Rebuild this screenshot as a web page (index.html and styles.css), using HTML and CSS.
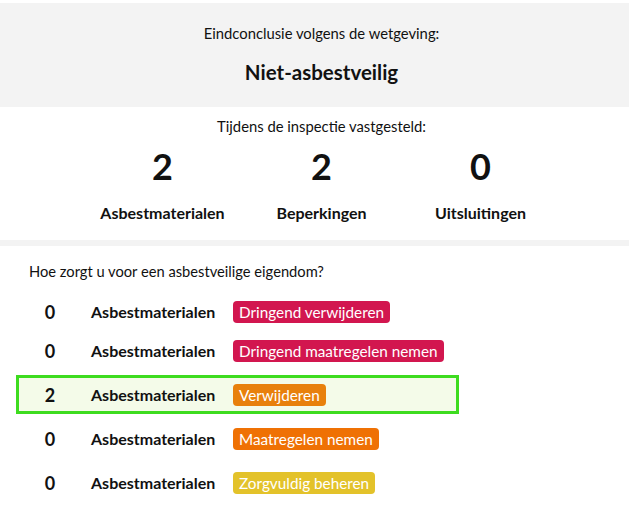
FILE: index.html
```html
<!DOCTYPE html>
<html lang="nl">
<head>
    <meta charset="UTF-8">
    <meta name="viewport" content="width=device-width, initial-scale=1.0">
    <title>Asbestattest</title>
    <link rel="stylesheet" href="styles.css">
</head>
<body>
    <div class="conclusion">
        <p class="intro">Eindconclusie volgens de wetgeving:</p>
        <h2 class="verdict">Niet-asbestveilig</h2>
    </div>

    <div class="findings">
        <p class="intro">Tijdens de inspectie vastgesteld:</p>
        <div class="stats">
            <div class="stat">
                <div class="stat-number">2</div>
                <div class="stat-label">Asbestmaterialen</div>
            </div>
            <div class="stat">
                <div class="stat-number">2</div>
                <div class="stat-label">Beperkingen</div>
            </div>
            <div class="stat">
                <div class="stat-number">0</div>
                <div class="stat-label">Uitsluitingen</div>
            </div>
        </div>
    </div>

    <div class="divider"></div>

    <div class="actions">
        <p class="question">Hoe zorgt u voor een asbestveilige eigendom?</p>
        <ul class="action-list">
            <li class="action-row">
                <span class="count">0</span>
                <span class="label">Asbestmaterialen</span>
                <span class="pill pill-urgent">Dringend verwijderen</span>
            </li>
            <li class="action-row">
                <span class="count">0</span>
                <span class="label">Asbestmaterialen</span>
                <span class="pill pill-urgent">Dringend maatregelen nemen</span>
            </li>
            <li class="action-row active">
                <span class="count">2</span>
                <span class="label">Asbestmaterialen</span>
                <span class="pill pill-remove">Verwijderen</span>
            </li>
            <li class="action-row">
                <span class="count">0</span>
                <span class="label">Asbestmaterialen</span>
                <span class="pill pill-measures">Maatregelen nemen</span>
            </li>
            <li class="action-row">
                <span class="count">0</span>
                <span class="label">Asbestmaterialen</span>
                <span class="pill pill-manage">Zorgvuldig beheren</span>
            </li>
        </ul>
    </div>
</body>
</html>
```

FILE: styles.css
```css
body {
    font-family: Lato, "Noto Sans", sans-serif;
    color: #111;
    margin: 0;
    padding-top: 3px;
    background: #fff;
}
p, h2, ul {
    margin: 0;
}
.conclusion {
    background-color: #f3f3f3;
    padding: 20px 0 21px 14px;
    text-align: center;
}
.intro {
    font-size: 14.8px;
    line-height: 20px;
}
.verdict {
    margin-top: 15px;
    font-size: 20.5px;
    line-height: 28px;
    font-weight: bold;
}
.findings {
    padding: 9px 0 16px 14px;
    text-align: center;
}
.stats {
    display: grid;
    grid-template-columns: repeat(3, 159px);
    justify-content: center;
    margin-top: 10px;
}
.stat-number {
    font-size: 36px;
    line-height: 40px;
    font-weight: bold;
}
.stat-label {
    margin-top: 16px;
    font-size: 16px;
    line-height: 22px;
    font-weight: bold;
}
.divider {
    height: 6px;
    background-color: #f3f3f3;
}
.actions {
    padding-top: 15px;
}
.question {
    padding-left: 29px;
    font-size: 14.7px;
    line-height: 20px;
}
.action-list {
    list-style: none;
    padding: 0;
    margin-top: 11px;
}
.action-row {
    display: flex;
    align-items: center;
    box-sizing: border-box;
    width: 443px;
    height: 39px;
    margin-left: 16px;
    border: 3px solid transparent;
}
.action-row:nth-child(n+3) {
    margin-top: 5px;
}
.action-row.active {
    border-color: #3ddc1f;
    background-color: #f4fbe9;
}
.count {
    width: 62px;
    text-align: center;
    font-size: 18px;
    font-weight: bold;
}
.label {
    width: 142px;
    margin-left: 10px;
    font-size: 16px;
    font-weight: bold;
}
.pill {
    height: 22px;
    line-height: 22px;
    padding: 0 6px;
    border-radius: 4px;
    color: #fff;
    font-size: 15.3px;
}
.pill-urgent {
    background-color: #d2164f;
}
.pill-remove {
    background-color: #e8800c;
}
.pill-measures {
    background-color: #ef7104;
}
.pill-manage {
    background-color: #e3c22a;
}
```
